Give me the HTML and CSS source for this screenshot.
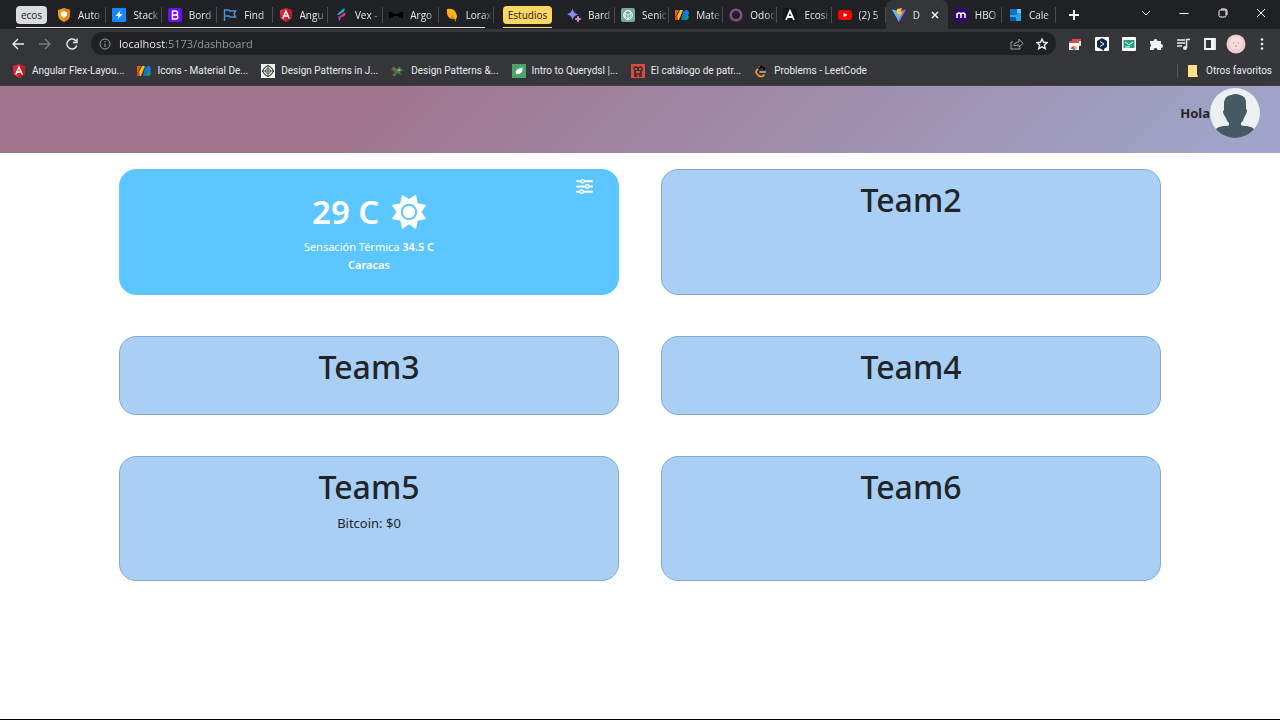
FILE: index.html
```html
<!DOCTYPE html>
<html lang="es">
<head>
<meta charset="utf-8">
<meta name="viewport" content="width=device-width, initial-scale=1">
<title>Dashboard</title>
<link rel="stylesheet" href="styles.css">
</head>
<body>
<div class="browser">
  <nav class="tabbar" aria-label="Pestañas">
    <div class="group group-ecos">
      <button class="chip">ecos</button>
      <div class="tabs">
        <button class="tab"><svg class="fav" viewBox="0 0 14 14"><path d="M7 0l6 2v5c0 3-2 5-6 7C3 12 1 10 1 7V2z" fill="#f39a1e"/><path d="M7 0l6 2v5c0 3-2 5-6 7z" fill="#e8820c"/><path d="M7 3l3 1.500v3L7 10 4 7.500v-3z" fill="#fff"/></svg><span>Auto</span></button>
        <button class="tab"><svg class="fav" viewBox="0 0 14 14"><rect width="14" height="14" rx="1" fill="#1389fd"/><path d="M8.500 2.500L3.500 8H6.500L5.500 11.500 10.500 6H7.500z" fill="#fff"/></svg><span>Stack</span></button>
        <button class="tab"><svg class="fav" viewBox="0 0 14 14"><rect width="14" height="14" rx="2" fill="#6f10f2"/><path d="M4.500 3h3a2 2 0 010 4h-3zM4.500 7h3.300a2 2 0 010 4H4.500z" fill="none" stroke="#fff" stroke-width="1.500"/></svg><span>Bord</span></button>
        <button class="tab"><svg class="fav" viewBox="0 0 14 14"><path d="M1.500 13V2h4l1 1h6L11 6l1.500 3H7L6 8H2" fill="none" stroke="#4a8fd6" stroke-width="1.500"/></svg><span>Find</span></button>
        <button class="tab"><svg class="fav" viewBox="0 0 14 14"><use href="#angular"/></svg><span>Angu</span></button>
        <button class="tab"><svg class="fav" viewBox="0 0 14 14"><path d="M3 6.500L9 1l2-.5-1 3L5 7z" fill="#18b4d8"/><path d="M4 9.500L10 5l2 0-1.500 3L6 10z" fill="#e8365d"/><path d="M4 8l3 2-2 3.500z" fill="#8b4bdd"/></svg><span>Vex -</span></button>
        <button class="tab"><svg class="fav" viewBox="0 0 14 14"><path d="M0 4q2-1 5 2h4q3-3 5-2v6q-2 1-5-2H5q-3 3-5 2z" fill="#000"/></svg><span>Argo</span></button>
        <button class="tab"><svg class="fav" viewBox="0 0 14 14"><path d="M2 1q7-1 9 4 2 4 0 6H7Q1 10 2 1z" fill="#f9b21a"/><path d="M7 6l4 6v2l-2-3H6z" fill="#e88d0b"/></svg><span>Lorax</span></button>
      </div>
    </div>
    <div class="group group-estudios">
      <button class="chip chip-yellow">Estudios</button>
      <div class="tabs">
        <button class="tab"><svg class="fav" viewBox="0 0 14 14"><path d="M5.500 0Q6 5 11 6.500 6 8 5.500 12 5 8 0 6 5 5 5.500 0z" fill="#8a87ee"/><path d="M11 8q0 3 3 3-3 0-3 3 0-3-3-3 3 0 3-3z" fill="#d78cc4" stroke="#d78cc4"/></svg><span>Bard</span></button>
        <button class="tab"><svg class="fav" viewBox="0 0 14 14"><rect width="14" height="14" rx="2" fill="#74aa9c"/><g fill="none" stroke="#fff" stroke-width=".8"><circle cx="7" cy="7" r="4.500"/><path d="M4 4l3-1.500 3 2v4L7 11 4 9zM4 9V5l3 2 3-2M7 7v4"/></g></svg><span>Senic</span></button>
        <button class="tab"><svg class="fav" viewBox="0 0 14 14"><use href="#material"/></svg><span>Mate</span></button>
        <button class="tab"><svg class="fav" viewBox="0 0 14 14"><circle cx="7" cy="7" r="5.300" fill="none" stroke="#8a4a80" stroke-width="2.600"/></svg><span>Odoo</span></button>
        <button class="tab"><svg class="fav" viewBox="0 0 14 14"><rect width="14" height="14" rx="2" fill="#15171b"/><path d="M3 12L7 3l4 9M5 9h5" fill="none" stroke="#fff" stroke-width="1.800"/></svg><span>Ecosi</span></button>
        <button class="tab"><svg class="fav" viewBox="0 0 14 14"><rect y="2" width="14" height="10" rx="3" fill="#f00"/><path d="M5.500 4.800v4.400L9.500 7z" fill="#fff"/></svg><span>(2) 5</span></button>
        <button class="tab tab-active" aria-current="page"><svg class="fav" viewBox="0 0 14 14"><path d="M0 1.500L7 3l7-1.500L7 14z" fill="#8b6ff2"/><path d="M0 1.500L7 3v11z" fill="#58b7fa"/><path d="M5 1l5-1-1.500 4h2L7 10l.5-4H5z" fill="#ffc928"/></svg><span>D</span><svg class="close" viewBox="0 0 8 8"><path d="M1 1l6 6M7 1L1 7" stroke="#fff" stroke-width="1.400"/></svg></button>
        <button class="tab"><svg class="fav" viewBox="0 0 14 14"><rect width="14" height="14" rx="2" fill="#35066b"/><path d="M3 10V5M3 7q0-2 2-2t2 2v3M7 7q0-2 2-2t2 2v3" fill="none" stroke="#fff" stroke-width="1.500"/></svg><span>HBO</span></button>
        <button class="tab"><svg class="fav" viewBox="0 0 14 14"><rect x="2" y="1" width="11" height="12" rx="1" fill="#28a8ea"/><path d="M2 1h7v6H2z" fill="#0f6fce"/><path d="M9 1h4v4H9z" fill="#63c8fa"/><path d="M2 9h6v4H2z" fill="#0e5ab3"/></svg><span>Cale</span></button>
      </div>
    </div>
    <button class="newtab" aria-label="Nueva pestaña"><svg viewBox="0 0 12 12"><path d="M6 1v10M1 6h10" stroke="#fff" stroke-width="1.800"/></svg></button>
    <div class="window-controls">
      <button aria-label="Buscar pestañas"><svg viewBox="0 0 10 10"><path d="M1 3l4 4 4-4"/></svg></button>
      <button aria-label="Minimizar"><svg viewBox="0 0 10 10"><path d="M.5 5.500h9"/></svg></button>
      <button aria-label="Restaurar"><svg viewBox="0 0 10 10"><rect x="1" y="2" width="7" height="7" rx="1.500"/><path d="M3 1h4q2 0 2 2v4"/></svg></button>
      <button aria-label="Cerrar"><svg viewBox="0 0 10 10"><path d="M1 1l8 8M9 1L1 9"/></svg></button>
    </div>
  </nav>

  <div class="toolbar">
    <div class="navigation">
      <button aria-label="Atrás"><svg viewBox="0 0 12 12"><path d="M12 6H1M6 1L1 6l5 5"/></svg></button>
      <button class="dim" aria-label="Adelante"><svg viewBox="0 0 12 12"><path d="M0 6h11M6 1l5 5-5 5"/></svg></button>
      <button aria-label="Recargar"><svg viewBox="0 0 12 12"><path d="M10 3A5 5 0 106 11a5 5 0 004.700-3.500M11 .5V4.500H7"/></svg></button>
    </div>
    <div class="omnibox">
      <svg class="info" viewBox="0 0 12 12"><circle cx="6" cy="6" r="5"/><path d="M6 5.500V9M6 3v1.300"/></svg>
      <input class="url" type="text" value="localhost:5173/dashboard" aria-label="Dirección">
      <button aria-label="Compartir"><svg class="share" viewBox="0 0 14 12"><path d="M3 4H1v7h9V9M4 8q0-4 5-4V1l4 4.500L9 9V7Q6 7 4 8z"/></svg></button>
      <button aria-label="Favorito"><svg viewBox="0 0 12 12"><path d="M6 1l1.500 3.300 3.700.3-2.800 2.400.9 3.700L6 8.800l-3.300 1.900.9-3.700L.8 4.600l3.700-.3z"/></svg></button>
    </div>
    <div class="extensions">
      <button aria-label="Extensión de capturas"><svg viewBox="0 0 14 14"><path d="M4 2h9v7H4z" fill="#ddd"/><path d="M4 2h9v2H4z" fill="#cf5050"/><path d="M1 4h10v9H1z" fill="#f5f5f5"/><path d="M1 4h10v2H1z" fill="#cf5050"/><path d="M3 12a3 3 0 016 0z" fill="#e24b42"/><path d="M6 12V9q3 0 3 3z" fill="#efc334"/><circle cx="6" cy="12" r="1.300" fill="#4b8be8"/></svg></button>
      <button aria-label="DeepL"><svg viewBox="0 0 14 14"><rect width="14" height="14" rx="1" fill="#fff"/><path d="M7 1l5 3v6l-3 2v2l-3-2-4-2V4z" fill="#0f2b46"/><path d="M5 4.500L9 7 5 9.500" fill="none" stroke="#fff"/></svg></button>
      <button aria-label="Correo"><svg viewBox="0 0 14 14"><rect width="14" height="14" rx="1" fill="#fff"/><path d="M1.500 3h11v8h-11z" fill="#1fa584"/><path d="M3 5l4 3 4-3M3 10h5" fill="none" stroke="#fff"/></svg></button>
      <button aria-label="Extensiones"><svg viewBox="0 0 14 14"><path d="M1 4h3.500a2 2 0 114 0H12v3a2 2 0 110 4v2H8.500a2 2 0 00-4 0H1V10a2 2 0 000-3.500z" fill="#f1f3f4"/></svg></button>
      <button aria-label="Multimedia"><svg viewBox="0 0 14 14"><path d="M1 3h8M1 6h8M1 9h5M10.500 11V2.500H14" fill="none" stroke="#e8eaed" stroke-width="1.500"/><circle cx="9" cy="11" r="2" fill="#e8eaed"/></svg></button>
      <button aria-label="Panel lateral"><svg viewBox="0 0 14 14"><path d="M2 2h10v10H2z" fill="none" stroke="#f1f3f4" stroke-width="1.800"/><path d="M8 2h4v10H8z" fill="#f1f3f4"/></svg></button>
      <button class="profile" aria-label="Perfil"><svg viewBox="0 0 20 20"><circle cx="10" cy="10" r="9.500" fill="#efcdd0"/><circle cx="10" cy="9" r="6.500" fill="#f5dcdd"/><path d="M7 9h1M12 9h1M9 12h2" stroke="#b87880"/></svg></button>
      <button aria-label="Menú"><svg viewBox="0 0 14 14" fill="#f1f3f4"><circle cx="7" cy="2.500" r="1.300"/><circle cx="7" cy="7" r="1.300"/><circle cx="7" cy="11.500" r="1.300"/></svg></button>
    </div>
  </div>

  <nav class="bookmarks" aria-label="Marcadores">
    <a href="#"><svg class="fav" viewBox="0 0 14 14"><g id="angular"><path d="M7 0l6.300 2.200-1 8.500L7 14l-5.300-3.300-1-8.500z" fill="#dd2a36"/><path d="M7 0l6.300 2.200-1 8.500L7 14z" fill="#b91d2b"/><path d="M3.800 10.500L7 3l3.200 7.500M5.200 8h3.600" fill="none" stroke="#fff" stroke-width="1.400"/></g></svg>Angular Flex-Layou...</a>
    <a href="#"><svg class="fav" viewBox="0 0 14 14"><g id="material"><path d="M0 2h4L1 8H0z" fill="#ef5c23"/><path d="M5 2h3L4 12H0z" fill="#fdbd00"/><path d="M0 9l2-2 1 5H0z" fill="#e23e2b"/><path d="M8 3h2v9H6z" fill="#1769e0"/><path d="M10 2a3 3 0 013 5h-3z" fill="#1a73e8"/><path d="M10 7h3q2 3-1 5h-2z" fill="#0c9d58"/></g></svg>Icons - Material De...</a>
    <a href="#"><svg class="fav" viewBox="0 0 14 14"><path d="M0 0h14v14H0z" fill="#f2f2ee"/><g fill="none" stroke="#343c3a" stroke-width=".8"><circle cx="7" cy="7" r="5"/><circle cx="7" cy="7" r="2.500"/><path d="M7 1l6 6-6 6-6-6zM7 1v12M1 7h12"/></g></svg>Design Patterns in J...</a>
    <a href="#"><svg class="fav" viewBox="0 0 14 14"><path d="M2 3l4 2 3-3 1 3 3 1-4 2 2 3-5-2-2 3-1-5-3-1z" fill="#3d7d47"/><path d="M2 3l4 4M2 10l2 2" stroke="#b95540" stroke-width="1.500"/><circle cx="8" cy="6" r="1.300" fill="#90b07d"/></svg>Design Patterns &amp;...</a>
    <a href="#"><svg class="fav" viewBox="0 0 14 14"><path d="M0 0h14v14H0z" fill="#4aa56a"/><path d="M4 10Q2 5 10.500 3.500q1 6-5 6.500zM3 11.500l3-3" fill="#fff"/></svg>Intro to Querydsl |...</a>
    <a href="#"><svg class="fav" viewBox="0 0 14 14"><path d="M0 0h14v14H0z" fill="#d84a42"/><path d="M2 3l3-1 2 1 3-1 2 3-1 3v5H8L7 9l-1 4H3V7z" fill="#512d2b"/><path d="M4 5h2M8 5h2M5 8h4" stroke="#e19780"/></svg>El catálogo de patr...</a>
    <a href="#"><svg class="fav" viewBox="0 0 14 14"><path d="M8 1L3 6Q1 8 3 10l2 2q2 1 4 0l1.500-1.500" fill="none" stroke="#f5a21b" stroke-width="1.600"/><path d="M8 1L6 3.500M4.500 5l2-1.500q1-1 3 .5L11 5.500" fill="none" stroke="#090909" stroke-width="1.800"/><path d="M5.500 8H12" stroke="#b3b3b3" stroke-width="1.600"/></svg>Problems - LeetCode</a>
    <a class="others" href="#"><svg class="fav" viewBox="0 0 14 14"><path d="M2 1h9v9l1 3H2z" fill="#fde283"/></svg>Otros favoritos</a>
  </nav>
</div>

<header class="header">
  <span>Hola</span>
  <svg class="avatar" viewBox="0 0 50 50" role="img" aria-label="Usuario"><defs><clipPath id="round"><circle cx="25" cy="25" r="25"/></clipPath></defs><g clip-path="url(#round)"><path d="M0 0h50v50H0z" fill="#ecf0f1"/><path d="M14 14Q15 8 21 7q5-2 9 0 6 1 6 8v6q2 1 0 5l-2 4q-1 4-3 5v2q1 1 6 1 6 1 8 4v8H5v-8q2-3 8-4 6 0 6-1v-2q-2-1-3-5l-2-3q-2-4 0-5z" fill="#455a64"/></g></svg>
</header>

<main class="board">
  <section class="card weather">
    <button class="settings" aria-label="Ajustes"><svg viewBox="0 0 18 18"><path d="M1 3.500h16M1 9h16M1 14.500h16" stroke="#fff" stroke-width="2" stroke-linecap="round"/><g fill="#5bc6ff" stroke="#fff" stroke-width="1.500"><circle cx="7" cy="3.500" r="1.800"/><circle cx="12" cy="9" r="1.800"/><circle cx="6" cy="14.500" r="1.800"/></g></svg></button>
    <h1>29 C <svg class="sun" viewBox="0 0 34 34"><path d="M17 5L23.500 1 25 9 33 10.500 28.500 17 33 23.500 25 25 23.500 33 17 28.500 10.500 33 9 25 1 23.500 5.500 17 1 10.500 9 9 10.500 1z" fill="#fff" stroke="#fff" stroke-width="1.500" stroke-linejoin="round"/><circle cx="17" cy="17" r="7.200" fill="#fff" stroke="#5bc6ff" stroke-width="2"/></svg></h1>
    <p>Sensación Térmica <strong>34.5 C</strong></p>
    <p><strong>Caracas</strong></p>
  </section>
  <section class="card"><h1>Team2</h1></section>
  <section class="card"><h1>Team3</h1></section>
  <section class="card"><h1>Team4</h1></section>
  <section class="card"><h1>Team5</h1><p class="coin">Bitcoin: $0</p></section>
  <section class="card"><h1>Team6</h1></section>
</main>
</body>
</html>
```

FILE: styles.css
```css
* {
  box-sizing: border-box;
}

body {
  margin: 0;
  min-height: 100vh;
  display: flex;
  flex-direction: column;
  background: #fff;
  border-bottom: 1px solid #000;
  color: #212529;
  font-family: "Noto Sans", "Open Sans", sans-serif;
}

button {
  padding: 0;
  border: 0;
  background: none;
  color: inherit;
  font: inherit;
}

svg {
  display: block;
  flex: none;
}

.browser {
  background: #35363a;
  color: #e8eaed;
  font-family: "Open Sans", "Noto Sans", sans-serif;
  font-size: 10px;
}

.tabbar {
  display: flex;
  height: 29px;
  padding-left: 16px;
  background: #202124;
}

.group {
  position: relative;
  display: flex;
  align-items: center;
  min-width: 0;
}

.group-ecos {
  flex: 478 1 0;
  margin-right: 9px;
}

.group-estudios {
  flex: 553 1 0;
}

.group::after {
  content: "";
  position: absolute;
  left: 0;
  right: 9px;
  bottom: 1px;
  height: 1px;
  background: #dadce0;
}

.group-estudios::after {
  right: auto;
  width: 49px;
  background: #fdd663;
}

.chip {
  flex: none;
  width: 31px;
  height: 18px;
  margin-right: 4px;
  border-radius: 4px;
  background: #dadce0;
  color: #202124;
}

.chip-yellow {
  width: 49px;
  margin-right: 9px;
  background: #fdd663;
}

.tabs {
  display: flex;
  flex: 1;
  min-width: 0;
  height: 29px;
}

.tab {
  position: relative;
  display: flex;
  flex: 1 1 0;
  align-items: center;
  gap: 7px;
  min-width: 0;
  padding: 0 1px 0 6px;
}

.tab::after {
  content: "";
  position: absolute;
  right: 0;
  top: 7px;
  width: 1px;
  height: 16px;
  background: #4a4c50;
}

.tab span {
  flex: 1;
  text-align: left;
  white-space: nowrap;
  mask-image: linear-gradient(90deg, #000 60%, transparent);
}

.tab-active {
  padding-right: 9px;
  border-radius: 7px 7px 0 0;
  background: #35363a;
}

.tab-active::after {
  display: none;
}

.fav {
  width: 14px;
  height: 14px;
}

.close {
  width: 8px;
  height: 8px;
}

.newtab {
  flex: none;
  width: 36px;
  display: grid;
  place-items: center;
}

.newtab svg {
  width: 12px;
  height: 12px;
}

.window-controls {
  display: flex;
  flex: none;
  width: 188px;
  padding: 0 0 3px 35px;
}

.window-controls button {
  display: grid;
  flex: 1;
  place-items: center;
}

.window-controls svg {
  width: 10px;
  height: 10px;
  fill: none;
  stroke: #fff;
}

.toolbar {
  display: flex;
  align-items: center;
  height: 29px;
}

.navigation {
  display: flex;
  gap: 15px;
  padding: 0 13px 0 12px;
}

.navigation svg,
.omnibox svg {
  width: 12px;
  height: 12px;
  fill: none;
  stroke: #e8eaed;
  stroke-width: 1.4;
}

.navigation .dim svg {
  stroke: #7b7c7f;
}

.omnibox {
  display: flex;
  flex: 1;
  align-items: center;
  gap: 8px;
  height: 23px;
  padding: 0 8px;
  border-radius: 12px;
  background: #202124;
}

.omnibox .info,
.omnibox .share {
  stroke: #9aa0a6;
  stroke-width: 1;
}

.omnibox .share {
  width: 14px;
  margin-right: 4px;
}

.url {
  flex: 1;
  min-width: 0;
  padding: 0;
  border: 0;
  outline: 0;
  background: linear-gradient(90deg, #fff 46px, #9aa0a6 46px);
  background-clip: text;
  color: transparent;
  font: 11px/16px "Open Sans", "Noto Sans", sans-serif;
}

.extensions {
  display: flex;
  align-items: center;
  gap: 13px;
  padding: 0 11px 0 12px;
}

.extensions svg {
  width: 14px;
  height: 14px;
}

.extensions .profile {
  margin: 0 -4px;
}

.extensions .profile svg {
  width: 20px;
  height: 20px;
}

.bookmarks {
  display: flex;
  align-items: center;
  gap: 13px;
  height: 28px;
  padding: 0 8px 2px 12px;
  border-bottom: 1px solid #3f4043;
  font-family: Roboto, "Open Sans", sans-serif;
}

.bookmarks a {
  display: flex;
  align-items: center;
  gap: 6px;
  color: inherit;
  text-decoration: none;
  white-space: nowrap;
}

.bookmarks .others {
  margin-left: auto;
  padding-left: 8px;
  border-left: 1px solid #55565a;
}

.header {
  display: flex;
  justify-content: flex-end;
  height: 67px;
  padding: 2px 20px 0;
  background: linear-gradient(135deg, #a0768f 30%, #9fa4c8 95%);
  font-size: 13px;
  font-weight: 700;
  line-height: 50px;
}

.avatar {
  width: 50px;
  height: 50px;
}

.board {
  display: grid;
  grid-template-columns: 1fr 1fr;
  gap: 41px 42px;
  padding: 16px 119px;
}

.card {
  position: relative;
  padding: 10px 16px 21px;
  border: 1px solid #86a9d2;
  border-radius: 17px;
  background: #a9cff5;
  text-align: center;
}

.card h1 {
  margin: 0 0 6px;
  font-size: 32px;
  font-weight: 500;
  line-height: 40px;
}

.card p {
  margin: 0;
  font-size: 11px;
  line-height: 18px;
}

.card .coin {
  margin-bottom: 26px;
  font-size: 13px;
  line-height: 20px;
}

.card.weather {
  padding: 22px 16px 20px;
  border-color: #5bc6ff;
  background: #5bc6ff;
  color: #fff;
}

.weather h1 {
  font-size: 33px;
  font-weight: 600;
}

.weather .sun {
  display: inline-block;
  width: 34px;
  height: 34px;
  margin-left: 4px;
  vertical-align: -5px;
}

.weather strong {
  font-weight: 600;
}

.settings {
  position: absolute;
  top: 8px;
  right: 25px;
}

.settings svg {
  width: 17px;
  height: 17px;
}
```
